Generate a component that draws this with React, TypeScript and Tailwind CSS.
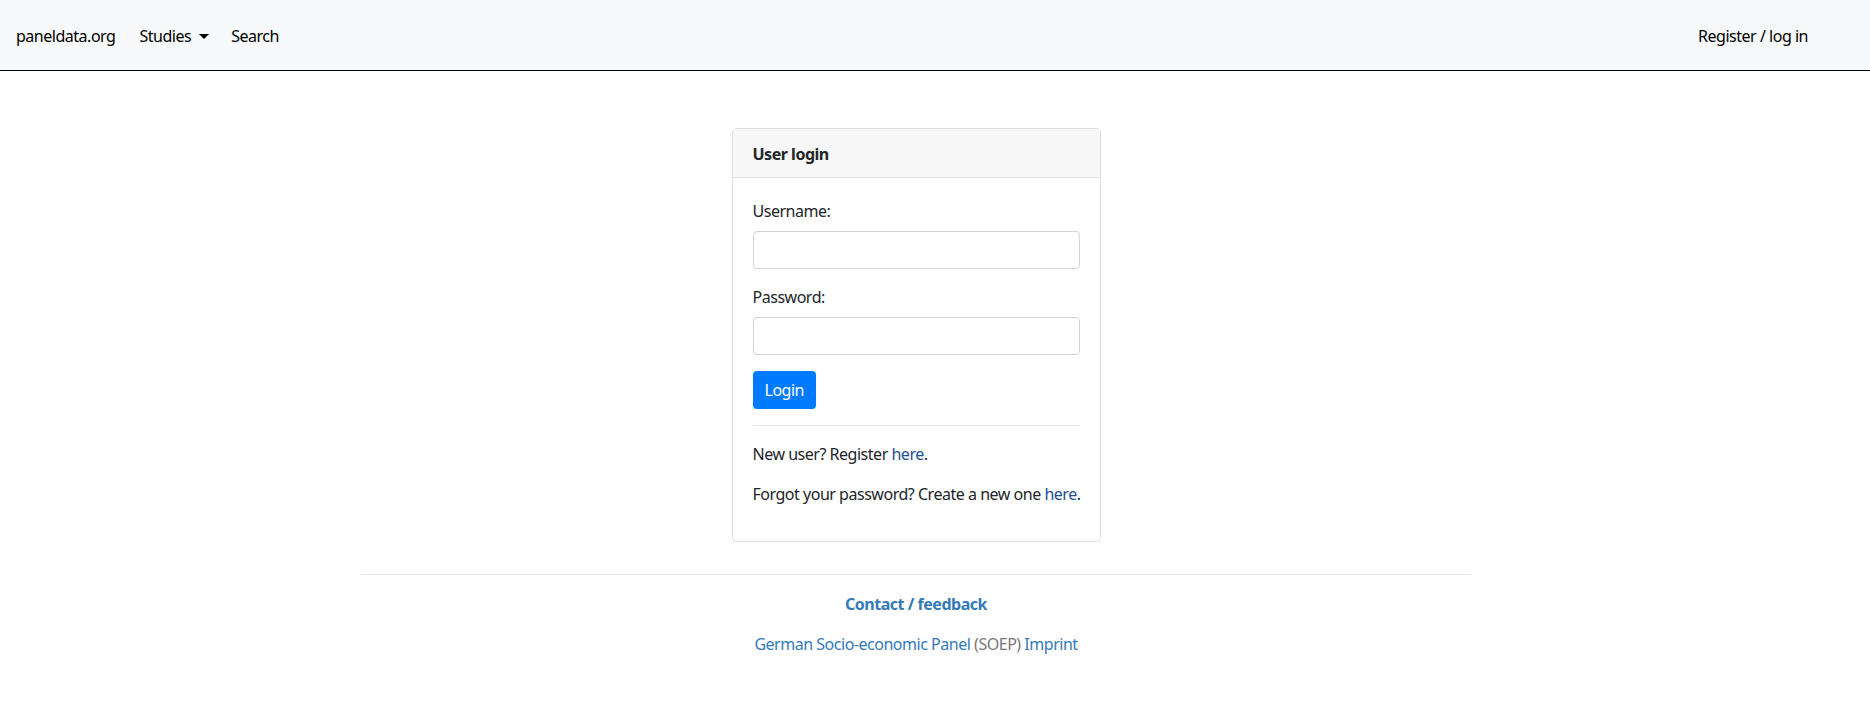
import React from "react";

const font = { fontFamily: '"Noto Sans", "Open Sans", Arial, sans-serif' };

export default function App() {
  return (
    <div className="min-h-[706px] bg-white text-[16px] tracking-[-0.03em] text-[#212529]" style={font}>
      <nav className="flex h-[71px] items-center border-b border-black bg-[#f8f9fa] pl-4 pr-[62px] pt-[2px] text-black">
        <a className="leading-6">paneldata.org</a>
        <a className="ml-[24px] flex items-center leading-6">
          Studies
          <span className="ml-[8px] inline-block h-0 w-0 border-x-[5px] border-t-[5px] border-x-transparent border-t-black" />
        </a>
        <a className="ml-[22px] leading-6">Search</a>
        <a className="ml-auto leading-6">Register / log in</a>
      </nav>
      <div className="pr-[38px]">
        <div className="mx-auto w-[1140px] px-[15px]">
          <div className="mx-auto mt-[57px] w-[369px] rounded-[4px] border border-[#dfdfdf]">
            <div className="h-[49px] border-b border-[#dfdfdf] bg-[#f7f7f7] px-5 pt-[13px] font-bold leading-6">
              User login
            </div>
            <div className="px-5 pt-[21px] pb-[19px]">
              <label className="mb-2 block leading-6">Username:</label>
              <input className="mb-4 block h-[38px] w-full rounded-[4px] border border-[#ced4da] px-3" />
              <label className="mb-2 block leading-6">Password:</label>
              <input type="password" className="mb-4 block h-[38px] w-full rounded-[4px] border border-[#ced4da] px-3" />
              <button className="h-[38px] rounded-[4px] bg-[#007bff] px-3 leading-6 text-white">Login</button>
              <hr className="my-4 border-t border-[#e5e5e5]" />
              <p className="mb-4 leading-6">
                New user? Register <a className="text-[#1d4f8f]">here</a>.
              </p>
              <p className="mb-4 whitespace-nowrap leading-6">
                Forgot your password? Create a new one <a className="text-[#1d4f8f]">here</a>.
              </p>
            </div>
          </div>
          <hr className="mt-[32px] border-t border-[#e5e5e5]" />
          <div className="mt-[17px] text-center font-bold leading-6 text-[#337ab7]">Contact / feedback</div>
          <div className="mt-[16px] text-center leading-6">
            <a className="text-[#337ab7]">German Socio-economic Panel</a>{" "}
            <span className="text-[#777]">(SOEP)</span>{" "}
            <a className="text-[#337ab7]">Imprint</a>
          </div>
        </div>
      </div>
    </div>
  );
}
